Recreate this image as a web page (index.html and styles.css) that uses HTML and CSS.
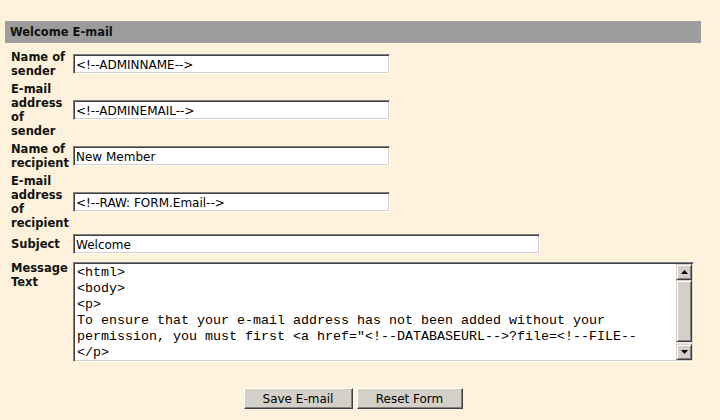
FILE: index.html
```html
<!DOCTYPE html>
<html>
<head>
<meta charset="utf-8">
<link rel="stylesheet" href="styles.css">
</head>
<body>
<div class="panel">
  <div class="header">Welcome E-mail</div>
  <form class="form">
    <label class="lbl">Name of sender</label>
    <input class="field" type="text" value="<!--ADMINNAME-->">
    <label class="lbl">E-mail address of sender</label>
    <input class="field" type="text" value="<!--ADMINEMAIL-->">
    <label class="lbl">Name of recipient</label>
    <input class="field" type="text" value="New Member">
    <label class="lbl">E-mail address of recipient</label>
    <input class="field" type="text" value="<!--RAW: FORM.Email-->">
    <label class="lbl">Subject</label>
    <input class="field wide" type="text" value="Welcome">
    <label class="lbl top">Message Text</label>
    <div class="textarea top">
      <div class="ta-text">&lt;html&gt;
&lt;body&gt;
&lt;p&gt;
To ensure that your e-mail address has not been added without your
permission, you must first &lt;a href="&lt;!--DATABASEURL--&gt;?file=&lt;!--FILE--
&lt;/p&gt;</div>
      <div class="scrollbar">
        <div class="sb-btn"><svg width="7" height="4" viewBox="0 0 7 4"><path d="M3.5 0L7 4H0z" fill="#000"/></svg></div>
        <div class="sb-track"><div class="sb-thumb"></div></div>
        <div class="sb-btn"><svg width="7" height="4" viewBox="0 0 7 4"><path d="M0 0H7L3.5 4z" fill="#000"/></svg></div>
      </div>
    </div>
  </form>
  <div class="buttons">
    <button class="btn save" type="button">Save E-mail</button>
    <button class="btn reset" type="button">Reset Form</button>
  </div>
</div>
</body>
</html>
```

FILE: styles.css
```css
html, body {
  margin: 0;
  padding: 0;
  background: #FFF2DC;
}
body {
  font-family: "DejaVu Sans", Verdana, sans-serif;
  color: #111;
}
.panel {
  margin: 21px 0 0 5px;
  width: 696px;
}
.header {
  height: 22px;
  line-height: 22px;
  background: #9C9C9C;
  padding-left: 5px;
  font-size: 11.5px;
  font-weight: bold;
  color: #111;
}
.form {
  display: grid;
  grid-template-columns: 60px auto;
  column-gap: 2px;
  row-gap: 4px;
  align-items: center;
  justify-items: start;
  margin: 7px 0 0 6px;
}
.lbl {
  font-size: 11.5px;
  font-weight: bold;
  line-height: 14px;
  width: 60px;
}
.lbl.top {
  align-self: start;
  margin-top: 3px;
}
.field {
  box-sizing: border-box;
  width: 317px;
  height: 20px;
  margin: 0;
  padding: 1px 2px 0;
  font-family: "DejaVu Sans", Tahoma, sans-serif;
  font-size: 12px;
  color: #000;
  background: #fff;
  border: 1px solid;
  border-color: #808080 #fff #fff #808080;
  box-shadow: inset 1px 1px #404040, inset -1px -1px #D4D0C8;
  outline: none;
}
.field.wide {
  width: 467px;
}
.textarea {
  margin-top: 4px;
  box-sizing: border-box;
  width: 621px;
  height: 100px;
  display: flex;
  background: #fff;
  border: 1px solid;
  border-color: #808080 #fff #fff #808080;
  box-shadow: inset 1px 1px #404040, inset -1px -1px #D4D0C8;
  padding: 1px;
}
.ta-text {
  flex: 1;
  white-space: pre;
  overflow: hidden;
  padding: 1px 2px;
  font-family: "Liberation Mono", "Courier New", monospace;
  font-size: 13.33px;
  line-height: 16px;
  color: #000;
}
.scrollbar {
  width: 16px;
  display: flex;
  flex-direction: column;
}
.sb-btn {
  box-sizing: border-box;
  width: 16px;
  height: 16px;
  background: #D4D0C8;
  border: 1px solid;
  border-color: #D4D0C8 #404040 #404040 #D4D0C8;
  box-shadow: inset 1px 1px #fff, inset -1px -1px #808080;
  display: flex;
  align-items: center;
  justify-content: center;
}
.sb-track {
  flex: 1;
  background: repeating-conic-gradient(#fff 0 25%, #D4D0C8 0 50%) 0 0 / 2px 2px;
  display: flex;
  flex-direction: column;
}
.sb-thumb {
  box-sizing: border-box;
  height: 62px;
  background: #D4D0C8;
  border: 1px solid;
  border-color: #D4D0C8 #404040 #404040 #D4D0C8;
  box-shadow: inset 1px 1px #fff, inset -1px -1px #808080;
}
.buttons {
  display: flex;
  justify-content: center;
  gap: 4px;
  margin-top: 26px;
}
.btn {
  box-sizing: border-box;
  height: 21px;
  padding: 0;
  margin: 0;
  font-family: "DejaVu Sans", Tahoma, sans-serif;
  font-size: 12px;
  color: #000;
  background: #D4D0C8;
  border: 1px solid;
  border-color: #fff #404040 #404040 #fff;
  box-shadow: inset -1px -1px #808080;
}
.btn.save { width: 109px; }
.btn.reset { width: 106px; }
```
